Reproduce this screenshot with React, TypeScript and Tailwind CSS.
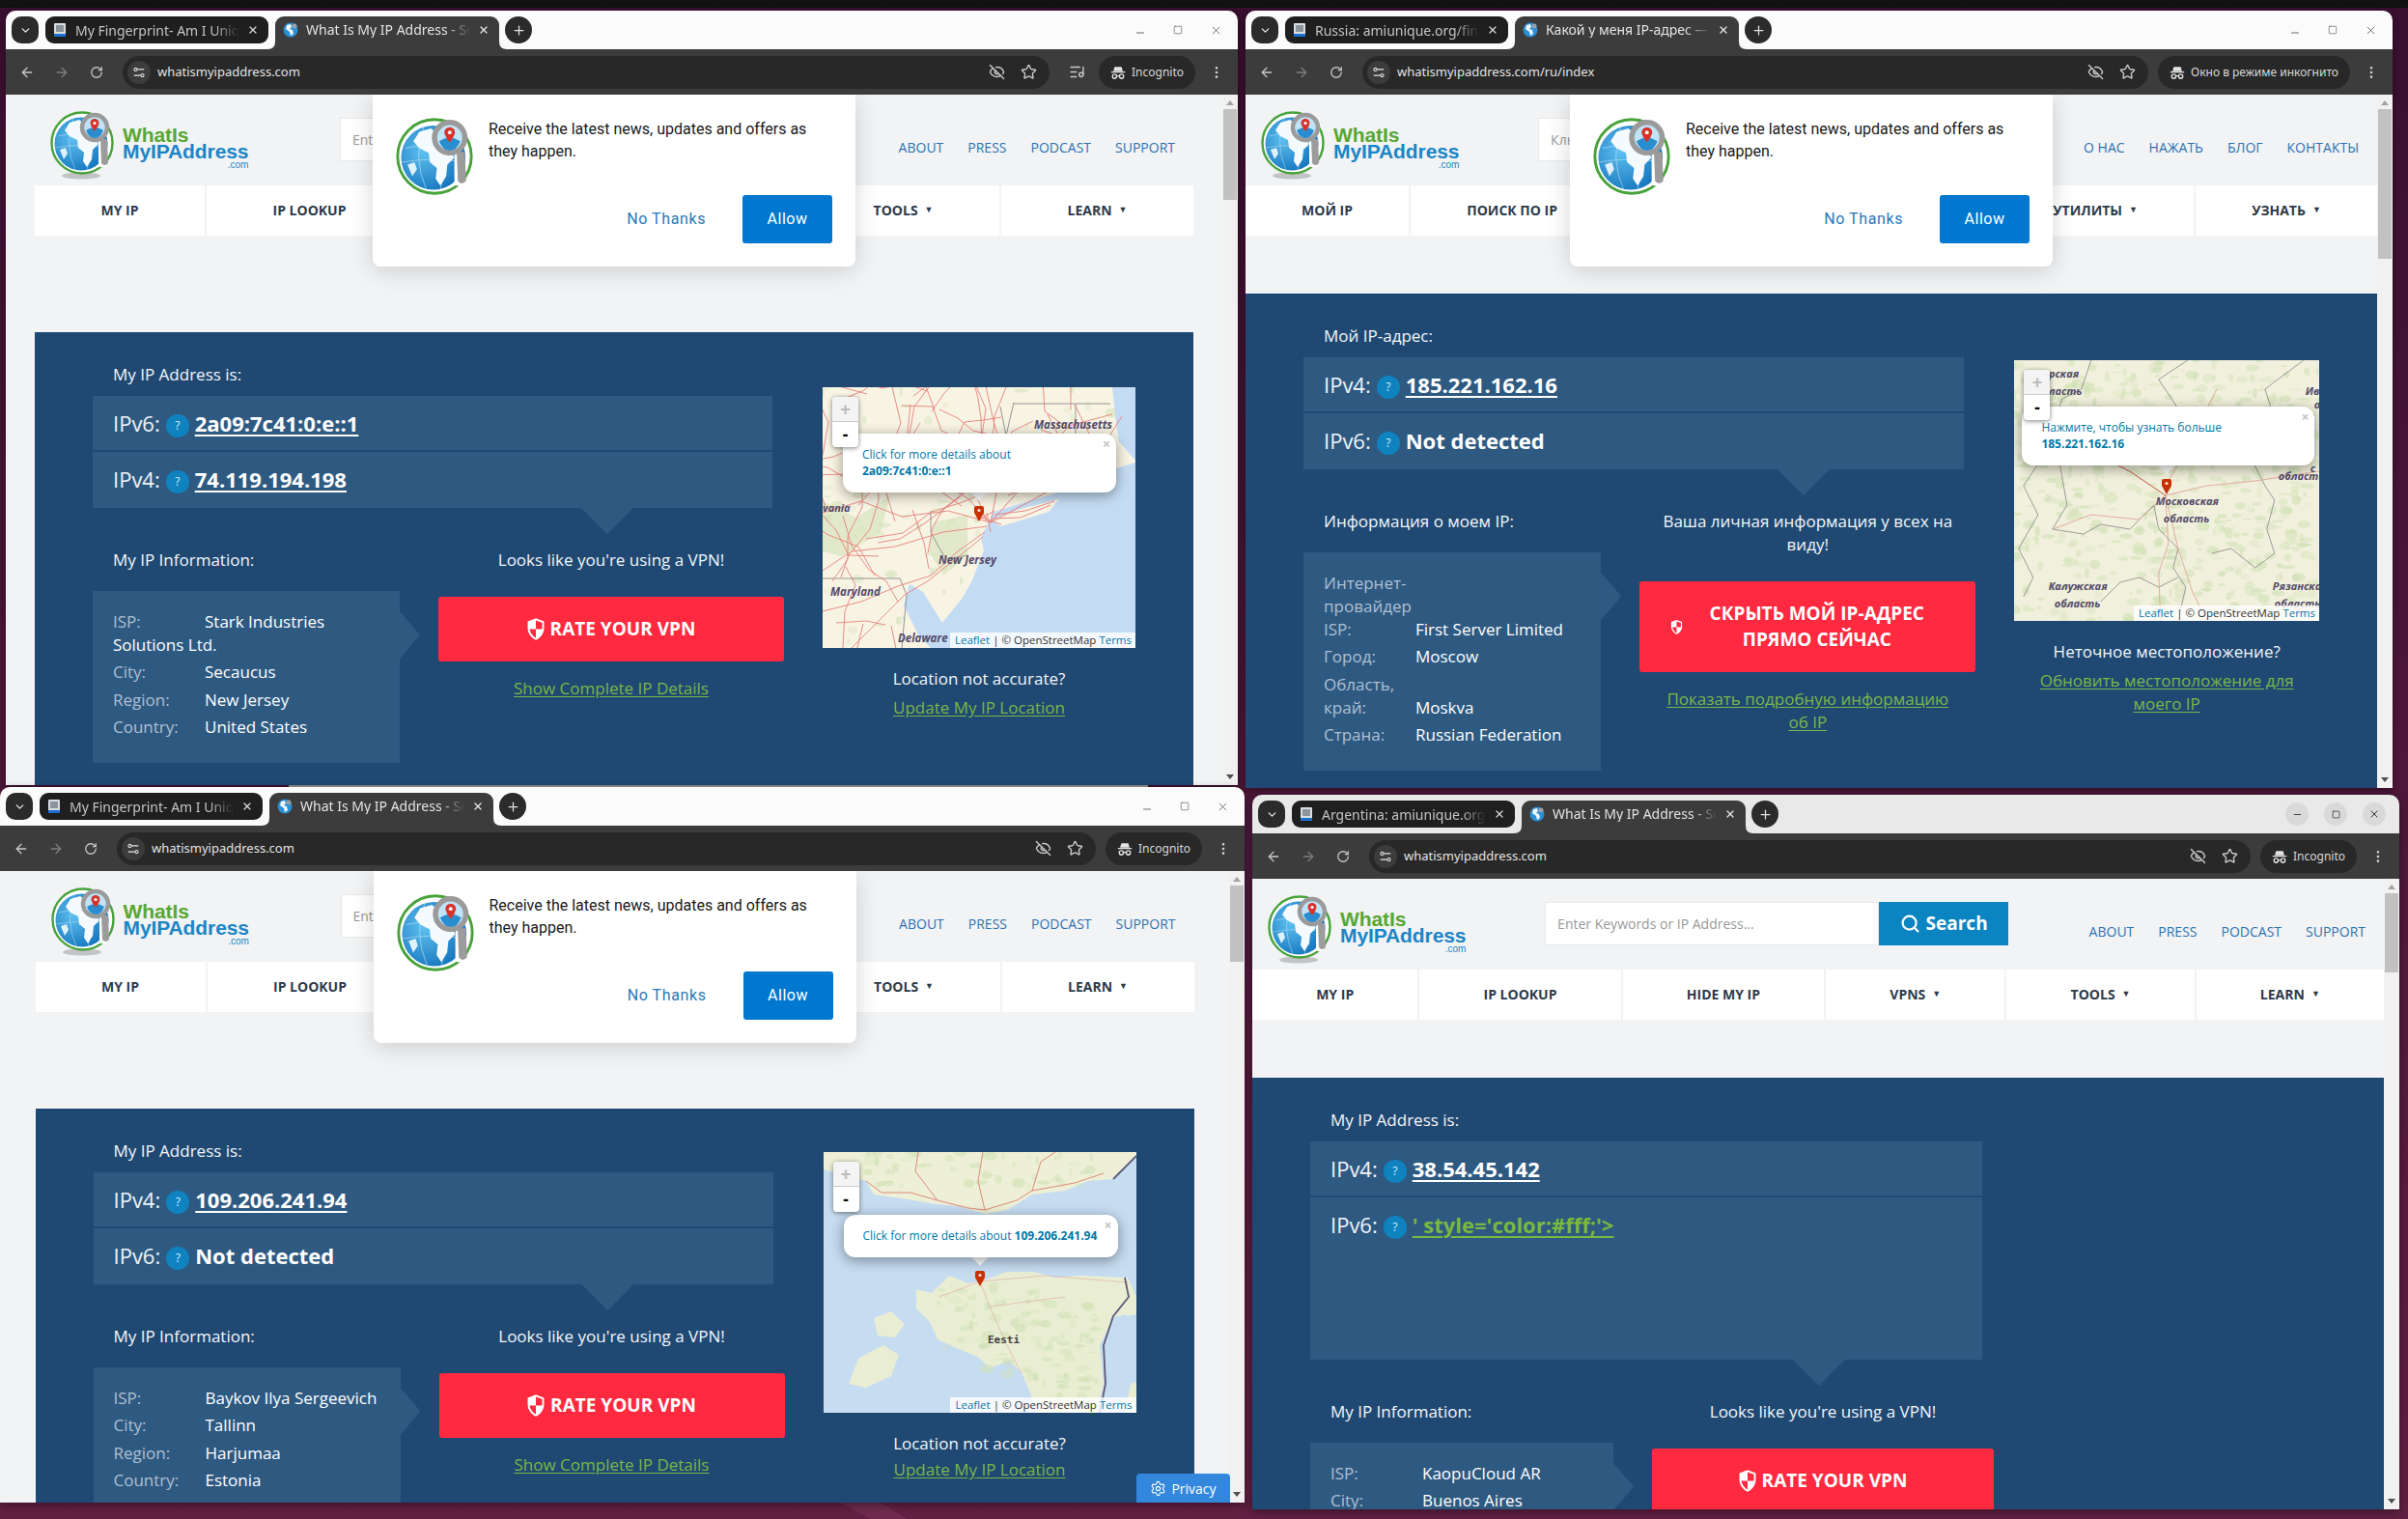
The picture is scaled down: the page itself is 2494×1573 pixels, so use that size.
import React, { useId } from 'react';
import { ArrowLeft, ArrowRight, RotateCw, EyeOff, Star, X, Plus, ChevronDown, EllipsisVertical, Minus, Square, Search, Settings, ListMusic } from 'lucide-react';

// small seeded generator so the map blotches stay the same on every render
const seeded = (seed: number) => {
  let s = seed;
  return () => {
    s = (s * 16807) % 2147483647;
    return s / 2147483647;
  };
};

const blotches = (seed: number, n: number, w: number, h: number) => {
  const r = seeded(seed);
  return Array.from({ length: n }, () => ({ x: r() * w, y: r() * h, rx: 1.5 + r() * 6, ry: 1 + r() * 4, o: 0.2 + r() * 0.45 }));
};

const nyLand = (x: number, y: number) => {
  if (x < 124) return x < 84 || y < 200;
  if (x < 172) return y < 244 - (x - 124) * 2.2;
  return y < 129 - (x - 177) * 0.38;
};

// short wandering road lines that stay on the land part of the east coast map
const nyRoads = (() => {
  const r = seeded(71);
  const out: string[] = [];
  while (out.length < 46) {
    let x = r() * 300;
    let y = r() * 260;
    if (!nyLand(x, y)) continue;
    let d = `M${x.toFixed(0)} ${y.toFixed(0)}`;
    const a = r() * Math.PI * 2;
    for (let i = 0; i < 4; i++) {
      const na = a + (r() - 0.5) * 1.2;
      const nx = x + Math.cos(na) * (18 + r() * 22);
      const ny = y + Math.sin(na) * (18 + r() * 22);
      if (!nyLand(nx, ny)) break;
      d += ` L${nx.toFixed(0)} ${ny.toFixed(0)}`;
      x = nx;
      y = ny;
    }
    out.push(d);
  }
  return out;
})();

const nyGreen = blotches(11, 110, 324, 270);
const moscowGreen = blotches(23, 620, 316, 270);
const estoniaGreen = blotches(37, 620, 324, 270);

const GlobeIcon = ({ className, shadow }: { className: string; shadow?: boolean }) => {
  const id = useId();
  return (
    <svg viewBox={shadow ? '0 0 66 72' : '0 0 66 66'} className={className}>
      <defs>
        <radialGradient id={id} cx="35%" cy="40%" r="75%">
          <stop offset="0%" stopColor="#5fc0f0" />
          <stop offset="100%" stopColor="#0c6db8" />
        </radialGradient>
      </defs>
      {shadow && <ellipse cx="32" cy="67" rx="20" ry="3.5" fill="#9a9a9a" opacity="0.55" />}
      <circle cx="33" cy="33" r="31.5" fill="#fff" stroke="#48a23a" strokeWidth="2.4" />
      <circle cx="32" cy="34" r="27.5" fill={`url(#${id})`} />
      <path d="M8 26 Q32 20 56 26 M5 38 Q32 33 58 38 M24 7 Q14 34 26 61 M40 7 Q46 34 38 61" fill="none" stroke="#bfe3f7" strokeWidth="0.5" />
      <path d="M20 12 L30 9 L36 14 L32 19 L38 24 L45 25 L50 34 L44 40 L43 50 L38 58 L34 52 L35 43 L29 38 L28 30 L20 26 L15 20 Z" fill="#f4fafd" />
      <path d="M10 40 L16 38 L18 44 L14 50 Z" fill="#dff1fb" />
      <rect x="50" y="30" width="8" height="28" rx="2" fill="#fff" />
      <path d="M52 29 L59 29 L60 54 Q56 58 53 54 Z" fill="#9c9c9c" />
      <circle cx="46" cy="17" r="13" fill="#bfe3f7" stroke="#9a9a9a" strokeWidth="4.5" />
      <path d="M37 20 Q46 14 55 20 Q52 28 46 28 Q40 28 37 20 Z" fill="#2a8dd0" />
      <path d="M46 8 a4.5 4.5 0 0 1 4.5 4.5 Q50 16 46 21 Q42 16 41.5 12.5 A4.5 4.5 0 0 1 46 8 Z" fill="#d8332a" />
      <circle cx="46" cy="12.5" r="1.6" fill="#fff" />
    </svg>
  );
};

const Logo = () => (
  <div className="flex items-start">
    <GlobeIcon className="w-[66px] h-[72px] shrink-0 -mt-[2px]" shadow />
    <div className="ml-[9px] mt-[14px] font-['Liberation_Sans',Arial,sans-serif] font-bold leading-[17px] text-[21px] tracking-[-0.1px]">
      <div className="text-[#58a733]">WhatIs</div>
      <div className="text-[#1c85c6]">MyIPAddress</div>
      <div className="text-right text-[10px] leading-[12px] font-normal tracking-normal text-[#1c85c6]">.com</div>
    </div>
  </div>
);

const TuneIcon = () => (
  <svg viewBox="0 0 16 16" className="w-[14px] h-[14px]" fill="none" stroke="#e3e3e3" strokeWidth="1.3">
    <circle cx="4" cy="4.5" r="1.8" />
    <path d="M6 4.5h8M2 11.5h8" />
    <circle cx="12" cy="11.5" r="1.8" />
  </svg>
);

const IncognitoIcon = () => (
  <svg viewBox="0 0 20 20" className="w-[18px] h-[18px] shrink-0" fill="none" stroke="#e3e3e3" strokeWidth="1.5">
    <path d="M6 3.5h8l1.5 5h-11z" fill="#e3e3e3" stroke="none" />
    <path d="M2 9.5h16" />
    <circle cx="6" cy="14.5" r="2.4" />
    <circle cx="14" cy="14.5" r="2.4" />
    <path d="M8.4 14h3.2" />
  </svg>
);

const FingerprintFavicon = () => (
  <svg viewBox="0 0 16 16" className="w-[16px] h-[16px] shrink-0">
    <rect x="2" y="1" width="12" height="14" rx="1" fill="#d8dde2" />
    <rect x="4" y="3" width="8" height="7" fill="#8b949c" />
    <rect x="2" y="12" width="12" height="3" fill="#1c6fd0" />
  </svg>
);

const WorldFavicon = () => (
  <svg viewBox="0 0 16 16" className="w-[16px] h-[16px] shrink-0">
    <circle cx="8" cy="8" r="7.5" fill="#2b8fd4" />
    <path d="M4 3 L8 2 L9 5 L7 7 L10 8 L11 12 L8 14 L7 10 L3 7 Z" fill="#eef7fc" />
    <circle cx="12" cy="4" r="2.5" fill="#9aa0a5" />
  </svg>
);

const TabFlare = ({ side }: { side: 'left' | 'right' }) =>
  side === 'left' ? (
    <svg viewBox="0 0 8 8" className="absolute -left-[8px] bottom-0 w-[8px] h-[8px]">
      <path d="M8 0 V8 H0 Q8 8 8 0 Z" fill="#3c3c3c" />
    </svg>
  ) : (
    <svg viewBox="0 0 8 8" className="absolute -right-[8px] bottom-0 w-[8px] h-[8px]">
      <path d="M0 0 V8 H8 Q0 8 0 0 Z" fill="#3c3c3c" />
    </svg>
  );

const TitleBar = ({ first, second, round }: { first: string; second: string; round?: boolean }) => (
  <div className={`h-[40px] shrink-0 flex items-start pt-[6px] pl-[6px] pr-[16px] ${round ? 'bg-[#e9e9e9]' : 'bg-[#fbfbfb]'}`}>
    <div className="w-[28px] h-[28px] rounded-[10px] bg-[#2b2b2b] flex items-center justify-center text-[#e3e3e3]">
      <ChevronDown size={13} strokeWidth={2.5} />
    </div>
    <div className="ml-[7px] w-[231px] h-[28px] rounded-[9px] bg-[#1f1f1f] flex items-center pl-[7px] pr-[10px] text-[#c4c4c4]">
      <FingerprintFavicon />
      <span className="ml-[8px] flex-1 overflow-hidden whitespace-nowrap text-[14px] font-['Noto_Sans',sans-serif] [mask-image:linear-gradient(to_right,black_85%,transparent)]">{first}</span>
      <X size={12} className="ml-[8px] shrink-0 text-[#d8d8d8]" strokeWidth={2.5} />
    </div>
    <div className="relative ml-[7px] w-[232px] h-[34px] rounded-t-[9px] bg-[#3c3c3c] flex items-start pt-[6px] pl-[8px] pr-[10px] text-[#e3e3e3]">
      <TabFlare side="left" />
      <TabFlare side="right" />
      <WorldFavicon />
      <span className="ml-[8px] flex-1 overflow-hidden whitespace-nowrap text-[14px] leading-[16px] font-['Noto_Sans',sans-serif] [mask-image:linear-gradient(to_right,black_85%,transparent)]">{second}</span>
      <X size={12} className="ml-[8px] mt-[2px] shrink-0 text-[#e8e8e8]" strokeWidth={2.5} />
    </div>
    <div className="ml-[6px] w-[28px] h-[28px] rounded-full bg-[#2b2b2b] flex items-center justify-center text-[#e3e3e3]">
      <Plus size={15} strokeWidth={2} />
    </div>
    <div className="flex-1" />
    {round ? (
      <div className="flex items-center gap-[16px] h-[28px] -mr-[2px]">
        <div className="w-[24px] h-[24px] rounded-full bg-[#d9d9d9] flex items-center justify-center text-[#333]"><Minus size={11} /></div>
        <div className="w-[24px] h-[24px] rounded-full bg-[#d9d9d9] flex items-center justify-center text-[#333]"><Square size={9} /></div>
        <div className="w-[24px] h-[24px] rounded-full bg-[#d9d9d9] flex items-center justify-center text-[#333]"><X size={12} /></div>
      </div>
    ) : (
      <div className="flex items-center gap-[28px] h-[28px] text-[#3c3c3c]">
        <Minus size={12} strokeWidth={1.5} className="mt-[6px]" />
        <Square size={10} strokeWidth={1.3} />
        <X size={13} strokeWidth={1.3} />
      </div>
    )}
  </div>
);

const ToolBar = ({ url, incognito, media }: { url: string; incognito: string; media?: boolean }) => (
  <div className="h-[47px] shrink-0 bg-[#3c3c3c] flex items-center pl-[4px] pr-[4px] font-['Noto_Sans',sans-serif]">
    <div className="w-[36px] flex justify-center text-[#c7c7c7]"><ArrowLeft size={16} /></div>
    <div className="w-[36px] flex justify-center text-[#7e7e7e]"><ArrowRight size={16} /></div>
    <div className="w-[36px] flex justify-center text-[#c7c7c7]"><RotateCw size={14} strokeWidth={2.2} /></div>
    <div className="ml-[9px] flex-1 h-[34px] rounded-full bg-[#282828] flex items-center pl-[5px] pr-[13px]">
      <div className="w-[24px] h-[24px] rounded-full bg-[#3c3c3c] flex items-center justify-center"><TuneIcon /></div>
      <span className="ml-[7px] flex-1 text-[13px] text-[#e3e3e3] whitespace-nowrap">{url}</span>
      <EyeOff size={17} className="text-[#c7c7c7]" />
      <Star size={17} className="ml-[16px] text-[#c7c7c7]" />
    </div>
    {media ? (
      <div className="ml-[10px] mr-[5px] w-[36px] flex justify-center text-[#c7c7c7]"><ListMusic size={17} /></div>
    ) : (
      <div className="w-[10px]" />
    )}
    <div className="h-[34px] rounded-full bg-[#282828] flex items-center pl-[11px] pr-[12px] gap-[5px]">
      <IncognitoIcon />
      <span className="text-[12px] text-[#d8d8d8] whitespace-nowrap">{incognito}</span>
    </div>
    <div className="ml-[4px] w-[36px] flex justify-center text-[#d0d0d0]"><EllipsisVertical size={16} /></div>
  </div>
);

const ScrollBar = ({ thumb }: { thumb: string }) => (
  <div className="w-[16px] shrink-0 bg-[#f1f1f1] flex flex-col items-center">
    <div className="mt-[6px] w-0 h-0 border-x-[4px] border-x-transparent border-b-[5px] border-b-[#a3a3a3]" />
    <div className={`mt-[4px] w-[14px] bg-[#c1c1c1] ${thumb}`} />
    <div className="flex-1" />
    <div className="mb-[6px] w-0 h-0 border-x-[4px] border-x-transparent border-t-[5px] border-t-[#505050]" />
  </div>
);

const NotifyPopup = () => (
  <div className="absolute top-0 left-1/2 -translate-x-1/2 w-[500px] h-[178px] bg-white rounded-b-[8px] shadow-[0_4px_24px_rgba(0,0,0,0.16)] z-20 p-[24px] font-['Roboto',sans-serif]">
    <div className="flex h-[80px]">
      <GlobeIcon className="w-[80px] h-[80px] shrink-0" />
      <p className="ml-[16px] text-[16px] leading-[23px] text-[#1a1a1a] w-[340px]">Receive the latest news, updates and offers as they happen.</p>
    </div>
    <div className="flex justify-end items-center">
      <span className="mr-[38px] text-[16px] tracking-[0.6px] text-[#2a79b8]">No Thanks</span>
      <div className="w-[93px] h-[50px] rounded-[3px] bg-[#0078d0] flex items-center justify-center text-[16px] tracking-[0.5px] text-white">Allow</div>
    </div>
  </div>
);

const NAV_FONT = "font-['Open_Sans',sans-serif]";

const Header = ({ links, placeholder, items }: { links: string[]; placeholder: string; items: string[] }) => (
  <>
    <div className={`h-[94px] flex items-start ${NAV_FONT}`}>
      <div className="w-[calc(46%-236px)] shrink-0 pl-[16px] pt-[19px]"><Logo /></div>
      <div className="mt-[24px] w-[346px] h-[45px] bg-white border border-[#e8e8e8] flex items-center pl-[12px] text-[14px] text-[#999] whitespace-nowrap overflow-hidden">{placeholder}</div>
      <div className="mt-[24px] w-[134px] h-[45px] bg-[#0a85c2] flex items-center justify-center gap-[6px] text-[19px] font-bold text-white">
        <Search size={21} strokeWidth={2.5} />
        <span>Search</span>
      </div>
      <div className="flex-1" />
      <div className="mt-[45px] pr-[19px] flex gap-[25px] text-[14px] leading-[20px] text-[#2e72b0] whitespace-nowrap">
        {links.map((l) => <span key={l}>{l}</span>)}
      </div>
    </div>
    <div className={`h-[52px] bg-white flex pb-[2px] text-[14px] font-bold text-[#2d3a4a] ${NAV_FONT}`}>
      {items.map((item, i) => {
        const drop = item.endsWith('*');
        return (
          <div key={item} className={`flex-auto -mb-[2px] pb-[2px] flex items-center justify-center whitespace-nowrap px-[20px] ${i > 0 ? 'border-l-2 border-[#f1f3f5]' : ''}`}>
            {drop ? item.slice(0, -1) : item}
            {drop && <span className="ml-[7px] text-[9px] font-normal">▼</span>}
          </div>
        );
      })}
    </div>
  </>
);

const RateShield = ({ className }: { className: string }) => (
  <svg viewBox="0 0 16 20" className={className}>
    <path d="M8 0 L15.5 2.8 V9 C15.5 14 12 18 8 20 C4 18 .5 14 .5 9 V2.8 Z" fill="#fff" />
    <path d="M8 2 V10 H13.8 V9.2 V4 Z" fill="#ff2a3f" />
    <path d="M8 10 H2.2 C2.7 13.5 5 16.4 8 18 Z" fill="#ff2a3f" />
  </svg>
);

const HelpDot = () => (
  <span className="mx-[6px] mt-[6px] inline-flex w-[24px] h-[24px] rounded-full bg-[#0f83c0] items-center justify-center align-top text-[12px] leading-[24px] text-[#dbeef8]">?</span>
);

type Row = { proto: string; value: string; kind: 'ip' | 'none' | 'weird'; rowClass: string };

const IpRow = ({ proto, value, kind, rowClass }: Row) => (
  <div className={`bg-[#2e5a82] pl-[21px] pt-[13px] text-[22px] leading-[30px] text-[#eef3f7] whitespace-nowrap ${rowClass}`}>
    <span>{proto}:</span>
    <HelpDot />
    {kind === 'ip' && <span className="font-bold text-white underline decoration-2 underline-offset-[3px]">{value}</span>}
    {kind === 'none' && <span className="font-bold text-white">{value}</span>}
    {kind === 'weird' && <span className="font-bold text-[#7ab83e] underline decoration-2 underline-offset-[3px]">{value}</span>}
  </div>
);

type Info = { label: string; value: string };

type PanelProps = {
  addressLabel: string;
  rows: Row[];
  infoLabel: string;
  info: Info[];
  vpnHeading: string;
  buttonText: string;
  smallShield?: boolean;
  detailLink: string;
  leftClass: string;
  aside?: React.ReactNode;
  topGap: string;
};

const IpPanel = ({ addressLabel, rows, infoLabel, info, vpnHeading, buttonText, smallShield, detailLink, leftClass, aside, topGap }: PanelProps) => (
  <div className={`bg-[#1f4973] ${topGap} px-[60px] pb-[60px] flex items-start font-['Open_Sans',sans-serif] text-[17px] leading-[24px] text-[#f3f6f9]`}>
    <div className={`shrink-0 pr-[40px] ${leftClass}`}>
      <div className="pl-[21px] pt-[32px] h-[66px]">{addressLabel}</div>
      <div className="relative mr-[12px] flex flex-col gap-[2px]">
        {rows.map((r) => <IpRow key={r.proto} {...r} />)}
        <div className="absolute top-full left-[75.7%] -translate-x-1/2 w-[54px] h-[27px] bg-[#2e5a82] [clip-path:polygon(0_0,100%_0,50%_100%)]" />
      </div>
      <div className="mt-[42px] grid grid-cols-2">
        <div className="pr-[40px]">
          <div className="pl-[21px] h-[44px]">{infoLabel}</div>
          <div className="relative bg-[#2e5a82] pl-[21px] pr-[20px] pt-[20px] pb-[20px]">
            <div className="absolute left-full top-[21px] w-[21px] h-[49px] bg-[#2e5a82] [clip-path:polygon(0_0,100%_50%,0_100%)]" />
            {info.map((row) => (
              <div key={row.label} className="mb-[4.4px] text-white">
                <span className="inline-block w-[95px] text-[#aebfd1]">{row.label}</span>
                {row.value}
              </div>
            ))}
          </div>
        </div>
        <div className="text-center">
          <div className="mb-[26px] px-[10px]">{vpnHeading}</div>
          <div className="rounded-[3px] bg-[#ff2a3f] flex items-center justify-center gap-[6px] px-[32px] py-[20px] text-[19px] leading-[27px] font-bold text-white">
            <RateShield className={smallShield ? 'w-[13px] h-[15px] shrink-0' : 'w-[18px] h-[23px] shrink-0'} />
            <span>{buttonText}</span>
          </div>
          <div className="mt-[16px] px-[20px] text-[#7ab648] underline underline-offset-[2px]">{detailLink}</div>
        </div>
      </div>
    </div>
    {aside}
  </div>
);

const ZoomControl = () => (
  <div className="absolute left-[10px] top-[10px] w-[27px] h-[52px] rounded-[4px] shadow-[0_1px_5px_rgba(0,0,0,0.5)] overflow-hidden bg-white flex flex-col font-['Liberation_Sans',sans-serif] font-bold z-20">
    <div className="h-[26px] bg-[#f4f4f4] border-b border-[#ccc] flex items-center justify-center text-[18px] text-[#bbb]">+</div>
    <div className="h-[26px] flex items-center justify-center text-[18px] text-black">-</div>
  </div>
);

const MapPopup = ({ text, ip, inline, popupClass }: { text: string; ip: string; inline?: boolean; popupClass: string }) => (
  <div className={`absolute top-[109px] -translate-y-full z-10 ${popupClass}`}>
    <div className="relative bg-white rounded-[12px] shadow-[0_3px_14px_rgba(0,0,0,0.4)] pl-[20px] pr-[10px] pt-[13px] pb-[14px] text-[12px] leading-[17px] text-[#0078a8] whitespace-nowrap">
      <span className="absolute right-[6px] top-[2px] text-[14px] font-bold text-[#c3c3c3]">×</span>
      {text}
      {inline ? ' ' : <br />}
      <b>{ip}</b>
    </div>
  </div>
);

const MapFrame = ({ popup, children, viewBox }: { popup: React.ReactNode; children: React.ReactNode; viewBox: string }) => (
  <div className="relative h-[270px] overflow-hidden bg-white">
    <svg viewBox={viewBox} preserveAspectRatio="xMidYMid slice" className="absolute inset-0 w-full h-full">{children}</svg>
    <ZoomControl />
    {popup}
    <div className="absolute left-1/2 top-[109px] -translate-x-1/2 -translate-y-[7px] w-[13px] h-[13px] rotate-45 bg-white z-[9]" />
    <svg viewBox="0 0 10 16" className="absolute left-1/2 -translate-x-1/2 top-[123px] w-[10px] h-[16px] z-10">
      <path d="M0 2 Q0 0 2 0 H8 Q10 0 10 2 V7 L5 16 L0 7 Z" fill="#c93000" />
      <circle cx="5" cy="4.5" r="1.6" fill="#f5e6e0" />
    </svg>
    <div className="absolute right-0 bottom-0 h-[16px] pl-[5px] pr-[4px] bg-white/80 text-[11.5px] leading-[16px] text-[#333] z-10 whitespace-nowrap">
      <span className="text-[#0078a8]">Leaflet</span> | © OpenStreetMap <span className="text-[#0078a8]">Terms</span>
    </div>
  </div>
);

const labelCls = "font-['Open_Sans',sans-serif] italic font-bold";

const UsMap = () => (
  <>
    <rect width="324" height="270" fill="#f8f4e4" />
    {nyGreen.map((b, i) => (nyLand(b.x, b.y) ? <ellipse key={i} cx={b.x} cy={b.y} rx={b.rx} ry={b.ry} fill="#d3e2b8" opacity={b.o} /> : null))}
    <path d="M0 118 L35 135 L70 112 L60 150 L20 175 L0 170 Z M115 140 L150 132 L150 175 L125 195 L110 170 Z" fill="#cfe0b5" opacity="0.55" />
    <path d="M324 78 L287 89 L254 106 L220 116 L177 129 L172 140 L164 156 L167 169 L154 202 L144 219 L124 244 L104 212 L90 204 L84 226 L100 258 L112 270 L324 270 Z M300 0 L304 39 L307 56 L324 76 V0 Z" fill="#c4dcf3" />
    <path d="M176 137 L205 126 L245 116 L234 129 L205 138 L184 144 Z" fill="#f8f4e4" />
    <path d="M0 198 H80 L87 215 L82 270 M198 16 L190 50 L184 20 M198 17 H298 M262 18 L262 62 H296 M112 128 L112 150 L120 165 L128 178 L150 174" fill="none" stroke="#8a8a8a" strokeWidth="0.9" />
    <g fill="none" stroke="#e8807a" strokeWidth="0.9">
      {nyRoads.map((d, i) => <path key={i} d={d} />)}
      <path d="M174 140 L150 115 L112 90 L88 60 L95 20 L110 0" />
      <path d="M174 140 L180 110 L175 75 L178 30 L190 0" />
      <path d="M174 140 L205 105 L230 70 L255 40 L300 28" />
      <path d="M174 140 L215 118 L262 92 L290 62 L310 30" />
      <path d="M174 140 L130 128 L82 134 L40 118 L0 130" />
      <path d="M170 144 L125 150 L75 165 L30 170 L0 190" />
      <path d="M168 150 L140 170 L112 195 L78 206 L40 222 L0 232" />
      <path d="M166 155 L150 168 L110 200 L85 215 L60 240 L30 270" />
      <path d="M178 132 L210 128 L240 118 M176 136 L205 135 L236 122 M170 130 L174 150 M165 135 L185 142 M160 138 L178 128" />
    </g>
    <g className={labelCls} fontSize="11.5" fill="#544a6b">
      <text x="219" y="43">Massachusetts</text>
      <text x="0" y="129" fontSize="11">vania</text>
      <text x="120" y="183">New Jersey</text>
      <text x="8" y="216">Maryland</text>
      <text x="78" y="264">Delaware</text>
    </g>
  </>
);

const MoscowMap = () => (
  <>
    <rect width="316" height="270" fill="#f1f0dc" />
    {moscowGreen.map((b, i) => <ellipse key={i} cx={b.x} cy={b.y} rx={b.rx} ry={b.ry} fill="#cfe0b4" opacity={b.o} />)}
    <g fill="none" stroke="#77777a" strokeWidth="0.7">
      <path d="M30 100 L48 110 L55 150 L40 175 L72 180 L90 170 L120 175 L145 150 L150 175 L170 195 L165 215 L178 235 L170 270" />
      <path d="M170 50 L185 70 L175 90 L200 95 L240 90 L260 130 L270 145 L262 175 L270 200 L250 215 L225 195 L205 200" />
      <path d="M30 100 L10 130 L25 160 L5 195 L20 225 L10 245 M80 0 L70 30 L50 40 L40 70 L30 100 M170 50 L150 20 L180 0 M260 30 L300 0 M260 30 L270 60 L250 70 L240 90" />
      <path d="M90 250 L110 230 L130 225 L150 235 L170 225" />
    </g>
    <g fill="none" stroke="#dc9a90" strokeWidth="0.8">
      <path d="M157 140 L120 115 L90 100 L60 85" />
      <path d="M157 140 L160 190 L150 220 L152 270" />
      <path d="M157 140 L170 195 L185 240 L200 270" />
      <path d="M157 140 L200 130 L250 125 L316 115" />
      <path d="M157 140 L130 165 L80 160 L40 175" />
      <path d="M157 130 L175 100 L190 70 L210 30" />
    </g>
    <path d="M157 140 L120 115 L100 105" fill="none" stroke="#c8665c" strokeWidth="1" />
    <g className={labelCls} fontSize="11" fill="#544a6b">
      <text x="30" y="18">ерская</text>
      <text x="36" y="36">ласть</text>
      <text x="302" y="36">Ив</text>
      <text x="311" y="50">о</text>
      <text x="307" y="116">с</text>
      <text x="274" y="124">области</text>
      <text x="147" y="150">Московская</text>
      <text x="155" y="168">область</text>
      <text x="36" y="238">Калужская</text>
      <text x="42" y="256">область</text>
      <text x="268" y="238">Рязанская</text>
      <text x="270" y="256">область</text>
    </g>
  </>
);

const EstoniaMap = () => (
  <>
    <rect width="324" height="270" fill="#c6dcf1" />
    <path d="M0 0 H324 V4 L300 28 L274 30 L250 40 L216 44 L190 60 L167 64 L140 56 L118 54 L80 48 L52 44 L44 30 L0 18 Z" fill="#edf0d6" />
    <path d="M96 142 L112 146 L130 128 L150 136 L162 134 L190 124 L217 124 L240 130 L265 128 L315 130 L324 150 V168 L300 172 L286 200 L290 240 L282 270 H222 L216 254 L205 228 L192 216 L172 224 L160 212 L140 204 L118 194 L110 176 L96 162 Z" fill="#e9eed3" />
    <path d="M36 214 L50 206 L62 200 L78 210 L70 232 L44 244 L26 240 Z M52 172 L70 165 L84 178 L74 192 L56 190 Z" fill="#e9eed3" />
    <path d="M298 172 L312 168 L324 180 V270 H290 L296 240 L290 205 Z" fill="#c6dcf1" />
    <path d="M318 240 L324 238 V270 H312 Z" fill="#e9eed3" />
    {estoniaGreen.map((b, i) => {
      const land = (b.y < 36 && b.x > 40 && b.x < 290) || (b.y > 135 && b.y < 255 && b.x > 118 && b.x < 285 && b.y < 200 + (b.x - 120) * 0.5);
      return land ? <ellipse key={i} cx={b.x} cy={b.y} rx={b.rx} ry={b.ry} fill="#cfe0b4" opacity={b.o} /> : null;
    })}
    <g fill="none" stroke="#dd7d72" strokeWidth="0.9">
      <path d="M44 30 L60 42 L90 42 L118 50 L150 58 L167 60 L200 50 L216 40 L260 32 L290 22" />
      <path d="M167 60 L160 30 L165 0 M118 50 L95 20 L98 0 M216 40 L225 10 L240 0" />
    </g>
    <g fill="none" stroke="#dfb0a6" strokeWidth="0.7">
      <path d="M162 134 L172 160 L190 200 L205 230 M162 134 L120 150 M162 134 L230 128 L315 135 M172 160 L250 150" />
    </g>
    <path d="M324 4 L300 28 M312 130 L316 150 L300 170 L290 200 L292 240 L286 270" fill="none" stroke="#5e5a78" strokeWidth="1.8" />
    <text x="170" y="198" className="font-['DejaVu_Sans_Mono',monospace] font-bold" fontSize="11" fill="#3f3f3f">Eesti</text>
  </>
);

const MapColumn = ({ map, question, update, wrapClass, updateClass }: { map: React.ReactNode; question: string; update: string; wrapClass: string; updateClass: string }) => (
  <div className={`flex-1 min-w-0 text-center ${wrapClass}`}>
    {map}
    <div className="mt-[20px]">{question}</div>
    <div className={`px-[16px] text-[#7ab648] underline underline-offset-[2px] ${updateClass}`}>{update}</div>
  </div>
);

const EN_LINKS = ['ABOUT', 'PRESS', 'PODCAST', 'SUPPORT'];
const EN_ITEMS = ['MY IP', 'IP LOOKUP', 'HIDE MY IP', 'VPNS*', 'TOOLS*', 'LEARN*'];
const PLACEHOLDER = 'Enter Keywords or IP Address...';

const enPanel = {
  addressLabel: 'My IP Address is:',
  infoLabel: 'My IP Information:',
  vpnHeading: "Looks like you're using a VPN!",
  buttonText: 'RATE YOUR VPN',
  detailLink: 'Show Complete IP Details',
};

const WindowFrame = ({ className, children }: { className: string; children: React.ReactNode }) => (
  <div className={`absolute flex flex-col overflow-hidden rounded-t-[10px] shadow-[0_2px_8px_rgba(0,0,0,0.4)] ${className}`}>{children}</div>
);

const Page = ({ thumb, children, popup }: { thumb: string; children: React.ReactNode; popup?: boolean }) => (
  <div className="flex-1 min-h-0 flex bg-[#f1f3f5]">
    <div className="relative flex-1 min-w-0 overflow-hidden">
      <div className="w-full max-w-[1200px] mx-auto">{children}</div>
      {popup && <NotifyPopup />}
    </div>
    <ScrollBar thumb={thumb} />
  </div>
);

export default function App() {
  return (
    <div className="relative w-[2494px] h-[1573px] overflow-hidden bg-linear-to-b from-[#3a0f30] to-[#611f42]">
      <div className="h-[8px] bg-[#111111]" />
      <div className="absolute left-[299px] top-[813px] w-[890px] h-[3px] bg-[#bcbcbc]" />
      <div className="absolute left-[870px] top-[1556px] w-[70px] h-[17px] bg-[#6e2a4e] [clip-path:polygon(0_0,60%_0,100%_100%,45%_100%)]" />

      <WindowFrame className="left-[6px] top-[11px] w-[1276px] h-[802px]">
        <TitleBar first="My Fingerprint- Am I Unique" second="What Is My IP Address - See" />
        <ToolBar url="whatismyipaddress.com" incognito="Incognito" media />
        <Page thumb="h-[94px]" popup>
          <Header links={EN_LINKS} placeholder={PLACEHOLDER} items={EN_ITEMS} />
          <IpPanel
            {...enPanel}
            topGap="mt-[100px]"
            leftClass="w-[70%]"
            rows={[
              { proto: 'IPv6', value: '2a09:7c41:0:e::1', kind: 'ip', rowClass: 'h-[56px]' },
              { proto: 'IPv4', value: '74.119.194.198', kind: 'ip', rowClass: 'h-[58px]' },
            ]}
            info={[
              { label: 'ISP:', value: 'Stark Industries Solutions Ltd.' },
              { label: 'City:', value: 'Secaucus' },
              { label: 'Region:', value: 'New Jersey' },
              { label: 'Country:', value: 'United States' },
            ]}
            aside={
              <MapColumn
                wrapClass="mt-[57px]"
                updateClass="mt-[6px]"
                question="Location not accurate?"
                update="Update My IP Location"
                map={
                  <MapFrame
                    viewBox="0 0 324 270"
                    popup={<MapPopup popupClass="left-[21px] w-[283px] text-left" text="Click for more details about" ip="2a09:7c41:0:e::1" />}
                  >
                    <UsMap />
                  </MapFrame>
                }
              />
            }
          />
        </Page>
      </WindowFrame>

      <WindowFrame className="left-[1290px] top-[11px] w-[1188px] h-[805px]">
        <TitleBar first="Russia: amiunique.org/fingerprint" second="Какой у меня IP-адрес — узнать" />
        <ToolBar url="whatismyipaddress.com/ru/index" incognito="Окно в режиме инкогнито" />
        <Page thumb="h-[155px]" popup>
          <Header
            links={['О НАС', 'НАЖАТЬ', 'БЛОГ', 'КОНТАКТЫ']}
            placeholder="Ключевые слова или IP-адрес..."
            items={['МОЙ IP', 'ПОИСК ПО IP', 'СКРЫТЬ МОЙ IP', 'VPN*', 'УТИЛИТЫ*', 'УЗНАТЬ*']}
          />
          <IpPanel
            addressLabel="Мой IP-адрес:"
            infoLabel="Информация о моем IP:"
            vpnHeading="Ваша личная информация у всех на виду!"
            buttonText="СКРЫТЬ МОЙ IP-АДРЕС ПРЯМО СЕЙЧАС"
            smallShield
            detailLink="Показать подробную информацию об IP"
            topGap="mt-[60px]"
            leftClass="w-[70%]"
            rows={[
              { proto: 'IPv4', value: '185.221.162.16', kind: 'ip', rowClass: 'h-[56px]' },
              { proto: 'IPv6', value: 'Not detected', kind: 'none', rowClass: 'h-[58px]' },
            ]}
            info={[
              { label: 'Интернет-провайдер ISP:', value: 'First Server Limited' },
              { label: 'Город:', value: 'Moscow' },
              { label: 'Область, край:', value: 'Moskva' },
              { label: 'Страна:', value: 'Russian Federation' },
            ]}
            aside={
              <MapColumn
                wrapClass="mt-[69px]"
                updateClass="mt-[6px]"
                question="Неточное местоположение?"
                update="Обновить местоположение для моего IP"
                map={
                  <MapFrame
                    viewBox="0 0 316 270"
                    popup={<MapPopup popupClass="left-[8px] w-[303px] text-left" text="Нажмите, чтобы узнать больше" ip="185.221.162.16" />}
                  >
                    <MoscowMap />
                  </MapFrame>
                }
              />
            }
          />
        </Page>
      </WindowFrame>

      <WindowFrame className="left-0 top-[815px] w-[1289px] h-[741px]">
        <TitleBar first="My Fingerprint- Am I Unique" second="What Is My IP Address - See" />
        <ToolBar url="whatismyipaddress.com" incognito="Incognito" />
        <Page thumb="h-[79px]" popup>
          <Header links={EN_LINKS} placeholder={PLACEHOLDER} items={EN_ITEMS} />
          <IpPanel
            {...enPanel}
            topGap="mt-[100px]"
            leftClass="w-[70%]"
            rows={[
              { proto: 'IPv4', value: '109.206.241.94', kind: 'ip', rowClass: 'h-[56px]' },
              { proto: 'IPv6', value: 'Not detected', kind: 'none', rowClass: 'h-[58px]' },
            ]}
            info={[
              { label: 'ISP:', value: 'Baykov Ilya Sergeevich' },
              { label: 'City:', value: 'Tallinn' },
              { label: 'Region:', value: 'Harjumaa' },
              { label: 'Country:', value: 'Estonia' },
            ]}
            aside={
              <MapColumn
                wrapClass="mt-[45px]"
                updateClass="mt-[3px]"
                question="Location not accurate?"
                update="Update My IP Location"
                map={
                  <MapFrame
                    viewBox="0 0 324 270"
                    popup={<MapPopup popupClass="left-[21px] w-[284px] text-left" text="Click for more details about" ip="109.206.241.94" inline />}
                  >
                    <EstoniaMap />
                  </MapFrame>
                }
              />
            }
          />
        </Page>
        <div className="absolute right-[15px] bottom-0 w-[97px] h-[30px] rounded-t-[4px] bg-[#3388dd] flex items-center justify-center gap-[5px] text-[14px] text-white font-['Open_Sans',sans-serif] z-30">
          <Settings size={17} strokeWidth={1.6} />
          <span>Privacy</span>
        </div>
      </WindowFrame>

      <WindowFrame className="left-[1297px] top-[823px] w-[1188px] h-[740px]">
        <TitleBar round first="Argentina: amiunique.org/fingerprint" second="What Is My IP Address - See" />
        <ToolBar url="whatismyipaddress.com" incognito="Incognito" />
        <Page thumb="h-[82px]">
          <Header links={EN_LINKS} placeholder={PLACEHOLDER} items={EN_ITEMS} />
          <IpPanel
            {...enPanel}
            topGap="mt-[60px]"
            leftClass="w-[748px]"
            rows={[
              { proto: 'IPv4', value: '38.54.45.142', kind: 'ip', rowClass: 'h-[56px]' },
              { proto: 'IPv6', value: "' style='color:#fff;'>", kind: 'weird', rowClass: 'h-[168px]' },
            ]}
            info={[
              { label: 'ISP:', value: 'KaopuCloud AR' },
              { label: 'City:', value: 'Buenos Aires' },
            ]}
          />
        </Page>
      </WindowFrame>
    </div>
  );
}
